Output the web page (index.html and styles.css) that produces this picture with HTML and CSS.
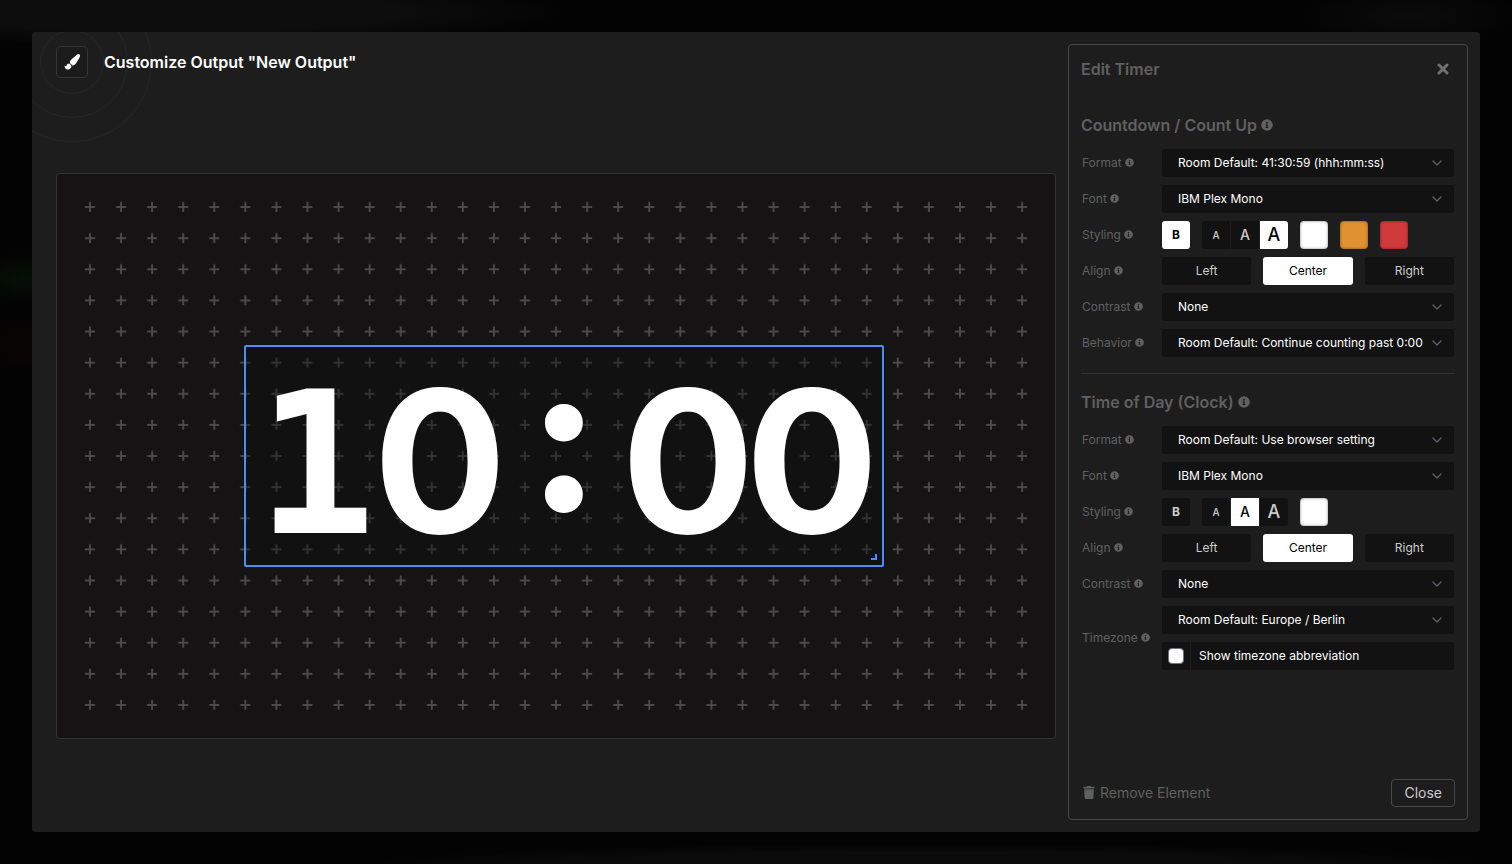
FILE: index.html
```html
<!DOCTYPE html>
<html lang="en">
<head>
<meta charset="utf-8">
<title>Customize Output</title>
<link rel="stylesheet" href="styles.css">
</head>
<body>
<svg class="sprite" aria-hidden="true">
  <symbol id="info" viewBox="0 0 512 512"><path fill="currentColor" fill-rule="evenodd" d="M256 8a248 248 0 1 0 0 496a248 248 0 1 0 0-496zm0 110a42 42 0 1 1 0 84a42 42 0 1 1 0-84zm56 254c0 7-5 12-12 12h-88c-7 0-12-5-12-12v-24c0-7 5-12 12-12h12v-64h-12c-7 0-12-5-12-12v-24c0-7 5-12 12-12h64c7 0 12 5 12 12v100h12c7 0 12 5 12 12z"/></symbol>
  <symbol id="chevron" viewBox="0 0 10 10"><path fill="none" stroke="currentColor" stroke-width="1.3" stroke-linecap="round" stroke-linejoin="round" d="M1 3l4 4l4-4"/></symbol>
</svg>
<main class="dialog">
  <svg class="rings" viewBox="0 0 162 162" aria-hidden="true"><g fill="none" stroke="#252626"><circle cx="81" cy="81" r="31.500"/><circle cx="81" cy="81" r="55.500"/><circle cx="81" cy="81" r="79.500"/></g></svg>
  <section class="workspace">
    <header class="header">
      <span class="badge"><svg class="brush" viewBox="0 0 512 512" aria-hidden="true"><path fill="currentColor" d="M167 308c30 4 59 33 65 65c13 66-37 123-105 123c-75 0-111-60-111-129c9 5 34 26 44 26c8 0 13-5 16-12c17-47 50-75 91-73zM457 0c-15 0-29 7-40 16c-203 181-225 189-225 245c0 14 3 28 9 40c28 10 48 31 58 58c9 4 19 6 29 6c62 0 98-46 213-260c8-15 15-31 15-48c0-34-29-57-59-57z"/></svg></span>
      <h1>Customize Output "New Output"</h1>
    </header>
    <div class="stage">
      <div class="canvas">
        <svg class="crosses" viewBox="0 0 998 564" preserveAspectRatio="xMinYMin slice" aria-hidden="true">
          <defs><pattern id="cross" x="17.500" y="17.500" width="31.070" height="31.120" patternUnits="userSpaceOnUse"><path d="M10.500 15.500h10M15.500 10.500v10" stroke="#4b4a4a" stroke-width="1.900"/></pattern></defs>
          <rect x="17.500" y="17.500" width="963" height="529" fill="url(#cross)"/>
        </svg>
        <div class="timer"><span class="one">1</span><span>0</span><span class="colon">:</span><span>0</span><span>0</span><i class="grip"></i></div>
      </div>
    </div>
  </section>
  <aside class="panel">
    <div class="panel-head">
      <h2>Edit Timer</h2>
      <button class="dismiss" aria-label="Close panel"><svg viewBox="0 0 12 12"><path fill="none" stroke="currentColor" stroke-width="3" stroke-linecap="round" d="M2 2l8 8M10 2l-8 8"/></svg></button>
    </div>
    <section class="group">
      <h2>Countdown / Count Up <svg class="info"><use href="#info"/></svg></h2>
      <div class="row"><label for="cf">Format <svg class="info"><use href="#info"/></svg></label><div class="select"><select id="cf"><option>Room Default: 41:30:59 (hhh:mm:ss)</option></select><svg><use href="#chevron"/></svg></div></div>
      <div class="row"><label for="cn">Font <svg class="info"><use href="#info"/></svg></label><div class="select"><select id="cn"><option>IBM Plex Mono</option></select><svg><use href="#chevron"/></svg></div></div>
      <div class="row"><label for="cs">Styling <svg class="info"><use href="#info"/></svg></label>
        <div class="tools"><button id="cs" class="square bold on">B</button><div class="sizes"><button class="square small">A</button><button class="square medium">A</button><button class="square large on">A</button></div><input type="color" value="#ffffff" aria-label="Text color"><input type="color" value="#e09230" aria-label="Warning color"><input type="color" value="#d13a3b" aria-label="Danger color"></div></div>
      <div class="row"><label for="ca">Align <svg class="info"><use href="#info"/></svg></label><div class="aligns"><button id="ca">Left</button><button class="on">Center</button><button>Right</button></div></div>
      <div class="row"><label for="cc">Contrast <svg class="info"><use href="#info"/></svg></label><div class="select"><select id="cc"><option>None</option></select><svg><use href="#chevron"/></svg></div></div>
      <div class="row"><label for="cb">Behavior <svg class="info"><use href="#info"/></svg></label><div class="select"><select id="cb"><option>Room Default: Continue counting past 0:00</option></select><svg><use href="#chevron"/></svg></div></div>
    </section>
    <hr>
    <section class="group">
      <h2>Time of Day (Clock) <svg class="info"><use href="#info"/></svg></h2>
      <div class="row"><label for="tf">Format <svg class="info"><use href="#info"/></svg></label><div class="select"><select id="tf"><option>Room Default: Use browser setting</option></select><svg><use href="#chevron"/></svg></div></div>
      <div class="row"><label for="tn">Font <svg class="info"><use href="#info"/></svg></label><div class="select"><select id="tn"><option>IBM Plex Mono</option></select><svg><use href="#chevron"/></svg></div></div>
      <div class="row"><label for="ts">Styling <svg class="info"><use href="#info"/></svg></label>
        <div class="tools"><button id="ts" class="square bold">B</button><div class="sizes"><button class="square small">A</button><button class="square medium on">A</button><button class="square large">A</button></div><input type="color" value="#ffffff" aria-label="Text color"></div></div>
      <div class="row"><label for="ta">Align <svg class="info"><use href="#info"/></svg></label><div class="aligns"><button id="ta">Left</button><button class="on">Center</button><button>Right</button></div></div>
      <div class="row"><label for="tc">Contrast <svg class="info"><use href="#info"/></svg></label><div class="select"><select id="tc"><option>None</option></select><svg><use href="#chevron"/></svg></div></div>
      <div class="row"><label for="tz">Timezone <svg class="info"><use href="#info"/></svg></label>
        <div class="stack"><div class="select"><select id="tz"><option>Room Default: Europe / Berlin</option></select><svg><use href="#chevron"/></svg></div>
        <label class="check"><span class="tick"><input type="checkbox"></span><span class="check-text">Show timezone abbreviation</span></label></div></div>
    </section>
    <footer class="panel-foot">
      <button class="remove"><svg viewBox="0 0 448 512"><path fill="currentColor" d="M432 32H312l-9-19A24 24 0 0 0 281 0H167a24 24 0 0 0-22 13l-9 19H16A16 16 0 0 0 0 48v32a16 16 0 0 0 16 16h416a16 16 0 0 0 16-16V48a16 16 0 0 0-16-16zM32 128l21 339a48 48 0 0 0 48 45h246a48 48 0 0 0 48-45l21-339z"/></svg>Remove Element</button>
      <button class="close">Close</button>
    </footer>
  </aside>
</main>
</body>
</html>
```
FILE: styles.css
```css
* { box-sizing: border-box; }
body {
  margin: 0;
  min-height: 100vh;
  padding: 32px;
  display: flex;
  font-family: Inter, "Liberation Sans", sans-serif;
  font-size: 12px;
  color: #fff;
  background:
    radial-gradient(ellipse 60px 26px at 24px 278px, #061006, transparent),
    radial-gradient(ellipse 60px 30px at 20px 345px, #090404, transparent),
    radial-gradient(ellipse 400px 34px at 170px 12px, #0c0c0c 60%, transparent),
    radial-gradient(ellipse 110px 30px at 1410px 16px, #0c0c0c, transparent),
    radial-gradient(ellipse 560px 20px at 930px 864px, #0b0b0b 60%, transparent),
    #030303;
}
h1, h2 { margin: 0; font-size: 16px; line-height: 24px; font-weight: 600; }
h2 { color: #606060; }
button, select, input { font: inherit; color: inherit; margin: 0; }
button { border: 0; padding: 0 0 1px; background: none; cursor: pointer; }
.sprite { position: absolute; width: 0; height: 0; }
.dialog {
  position: relative;
  flex: 1;
  display: flex;
  padding: 12px 12px 12px 24px;
  gap: 12px;
  overflow: hidden;
  border-radius: 4px;
  background: #1d1d1d;
}
.rings { position: absolute; left: -41px; top: -51px; width: 162px; height: 162px; }
.workspace { flex: 1; min-width: 0; display: flex; flex-direction: column; position: relative; }
.header { display: flex; gap: 16px; align-items: center; padding: 2px 0; }
.badge {
  display: grid;
  place-items: center;
  width: 32px;
  height: 32px;
  border: 1px solid #333434;
  border-radius: 4px;
  background: #1b1b1b;
}
.brush { width: 16px; height: 16px; }
.stage { flex: 1; display: flex; align-items: center; margin-bottom: -12px; }
.canvas {
  position: relative;
  flex: 1;
  aspect-ratio: 1000 / 566;
  border: 1px solid #303232;
  border-radius: 4px;
  background: #151314;
  overflow: hidden;
}
.crosses { display: block; width: 100%; height: 100%; }
.timer {
  position: absolute;
  left: 187px;
  top: 171px;
  width: 640px;
  height: 222px;
  border: 2px solid #4b8df8;
  border-radius: 2px;
  background: rgba(14, 15, 12, 0.4);
  display: flex;
  justify-content: center;
  align-items: baseline;
  font: 700 198px/222px Inter, sans-serif;
}
.timer span { width: 124px; display: flex; justify-content: center; }
.timer .one { font-family: "DejaVu Sans Mono", monospace; }
.timer .colon { font-size: 205px; font-weight: 800; font-feature-settings: "case"; }
.grip {
  position: absolute;
  right: 5px;
  bottom: 5px;
  width: 6px;
  height: 6px;
  border: solid #4b8df8;
  border-width: 0 2px 2px 0;
}
.panel {
  position: relative;
  width: 400px;
  display: flex;
  flex-direction: column;
  padding: 12px;
  border: 1px solid #484848;
  border-radius: 4px;
}
.panel-head { display: flex; justify-content: space-between; align-items: center; margin-bottom: 32px; }
.dismiss { display: grid; place-items: center; width: 24px; height: 24px; padding: 0; color: #707070; }
.dismiss svg { width: 12px; height: 12px; }
.info { width: 9px; height: 9px; }
h2 .info { width: 12px; height: 12px; }
.group { display: flex; flex-direction: column; gap: 8px; padding-right: 1px; }
.group h2 { margin-bottom: 4px; }
.row { display: grid; grid-template-columns: 81px 1fr; align-items: center; }
.row > label { padding: 0 0 1px 1px; line-height: 15px; color: #606060; white-space: nowrap; }
.select { display: grid; align-items: center; }
.select select, .select svg { grid-area: 1 / 1; }
.select select {
  appearance: none;
  width: 100%;
  height: 28px;
  padding: 0 16px 1px;
  border: 0;
  border-radius: 3px;
  background: #121212;
}
.select svg { width: 10px; height: 10px; margin-right: 12px; justify-self: end; color: #606068; pointer-events: none; }
.tools { display: flex; gap: 12px; }
.sizes { display: flex; gap: 1px; border-radius: 3px; overflow: hidden; }
.square { width: 28px; height: 28px; background: #121212; color: #ccc; font-weight: 500; }
.bold { border-radius: 3px; font-weight: 700; }
.small { font-size: 10px; }
.medium { font-size: 14px; }
.large { font-size: 18px; }
.tools .on, .aligns .on { background: #fff; color: #000; }
input[type="color"] {
  appearance: none;
  width: 28px;
  height: 28px;
  padding: 0;
  border: 0;
  background: none;
}
input[type="color"]::-webkit-color-swatch-wrapper { padding: 0; }
input[type="color"]::-webkit-color-swatch {
  border: 0;
  border-radius: 4px;
  box-shadow: inset 0 0 3px rgba(0, 0, 0, 0.5);
}
.aligns { display: grid; grid-template-columns: repeat(3, 1fr); gap: 12px; }
.aligns button { height: 28px; border-radius: 3px; background: #121212; color: #ccc; }
hr { width: 100%; margin: 16px 0; border: 0; border-top: 1px solid #303030; }
.stack { display: grid; gap: 8px; }
.check { display: flex; height: 28px; border-radius: 3px; background: #121212; }
.tick { display: grid; place-items: center; width: 29px; border-right: 1px solid #1b1b1b; }
.tick input { appearance: none; width: 16px; height: 16px; border: 1px solid #6b7280; border-radius: 4px; background: #fff; }
.check-text { padding: 0 0 1px 8px; align-self: center; }
.panel-foot { display: flex; justify-content: space-between; align-items: center; margin-top: auto; font-size: 14px; }
.remove { display: flex; align-items: center; gap: 5px; padding-left: 2px; color: #606060; }
.remove svg { width: 12px; height: 13px; }
.close { height: 28px; padding: 0 12px 1px; border: 1px solid #484848; border-radius: 4px; color: #ccc; }
```
